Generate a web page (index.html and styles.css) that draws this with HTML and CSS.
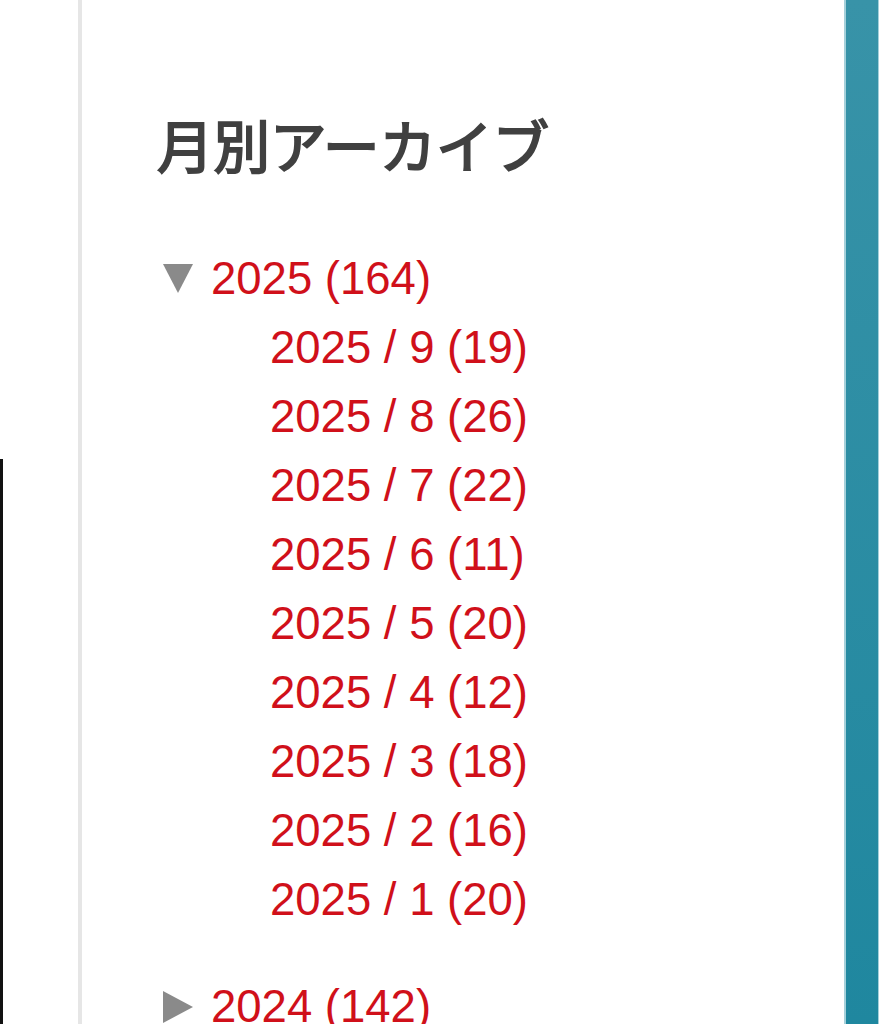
FILE: index.html
```html
<!DOCTYPE html>
<html lang="ja">
<head>
    <meta charset="UTF-8">
    <meta name="viewport" content="width=device-width, initial-scale=1.0">
    <title>月別アーカイブ</title>
    <link rel="stylesheet" href="styles.css">
</head>
<body>

<div class="page">
    <div class="gutter">
        <div class="gutter-line"></div>
    </div>

    <div class="sidebar">
        <h2 class="archive-title">月別アーカイブ</h2>

        <ul class="archive">
            <li class="year open">
                <div class="year-row">
                    <span class="toggle"></span>
                    <a href="#">2025 (164)</a>
                </div>
                <ul class="months">
                    <li><a href="#">2025 / 9 (19)</a></li>
                    <li><a href="#">2025 / 8 (26)</a></li>
                    <li><a href="#">2025 / 7 (22)</a></li>
                    <li><a href="#">2025 / 6 (11)</a></li>
                    <li><a href="#">2025 / 5 (20)</a></li>
                    <li><a href="#">2025 / 4 (12)</a></li>
                    <li><a href="#">2025 / 3 (18)</a></li>
                    <li><a href="#">2025 / 2 (16)</a></li>
                    <li><a href="#">2025 / 1 (20)</a></li>
                </ul>
            </li>
            <li class="year">
                <div class="year-row">
                    <span class="toggle"></span>
                    <a href="#">2024 (142)</a>
                </div>
            </li>
        </ul>
    </div>

    <div class="edge"></div>
</div>

</body>
</html>
```

FILE: styles.css
```css
body {
    margin: 0;
    background-color: #ffffff;
    font-family: "Liberation Sans", "Noto Sans CJK JP", sans-serif;
    overflow: hidden;
}
.page {
    display: flex;
    height: 1024px;
    overflow: hidden;
}
.gutter {
    width: 78px;
    flex-shrink: 0;
}
.gutter-line {
    margin-top: 459px;
    height: 100%;
    border-left: 3px solid #111111;
}
.sidebar {
    flex: 1;
    border-left: 4px solid #e6e6e6;
    padding-left: 75px;
}
.edge {
    width: 32px;
    flex-shrink: 0;
    border-left: 2px solid #a5d0da;
    border-right: 1px solid #a5d0da;
    background: linear-gradient(#3893a8, #1f879f);
}
.archive-title {
    font-family: "Noto Sans CJK JP", sans-serif;
    font-size: 56.5px;
    font-weight: 400;
    -webkit-text-stroke: 2px #404040; /* medium weight isn't installed */
    line-height: 67px;
    color: #404040;
    margin: 110px 0 0 0;
}
.archive {
    list-style: none;
    margin: 67px 0 0 0;
    padding: 0;
}
.archive a {
    color: #d0101a;
    text-decoration: none;
}
.year-row,
.months li {
    font-size: 45.5px;
    line-height: 69px;
}
.year-row {
    display: flex;
    align-items: center;
}
.toggle {
    width: 0;
    height: 0;
    margin: 0 18px 0 6px;
}
.year.open .toggle {
    border-left: 15px solid transparent;
    border-right: 15px solid transparent;
    border-top: 29px solid #8a8a8a;
}
.year:not(.open) .toggle {
    border-top: 16px solid transparent;
    border-bottom: 16px solid transparent;
    border-left: 30px solid #8a8a8a;
}
.months {
    list-style: none;
    margin: 0 0 38px 0;
    padding: 0 0 0 113px;
}
```
